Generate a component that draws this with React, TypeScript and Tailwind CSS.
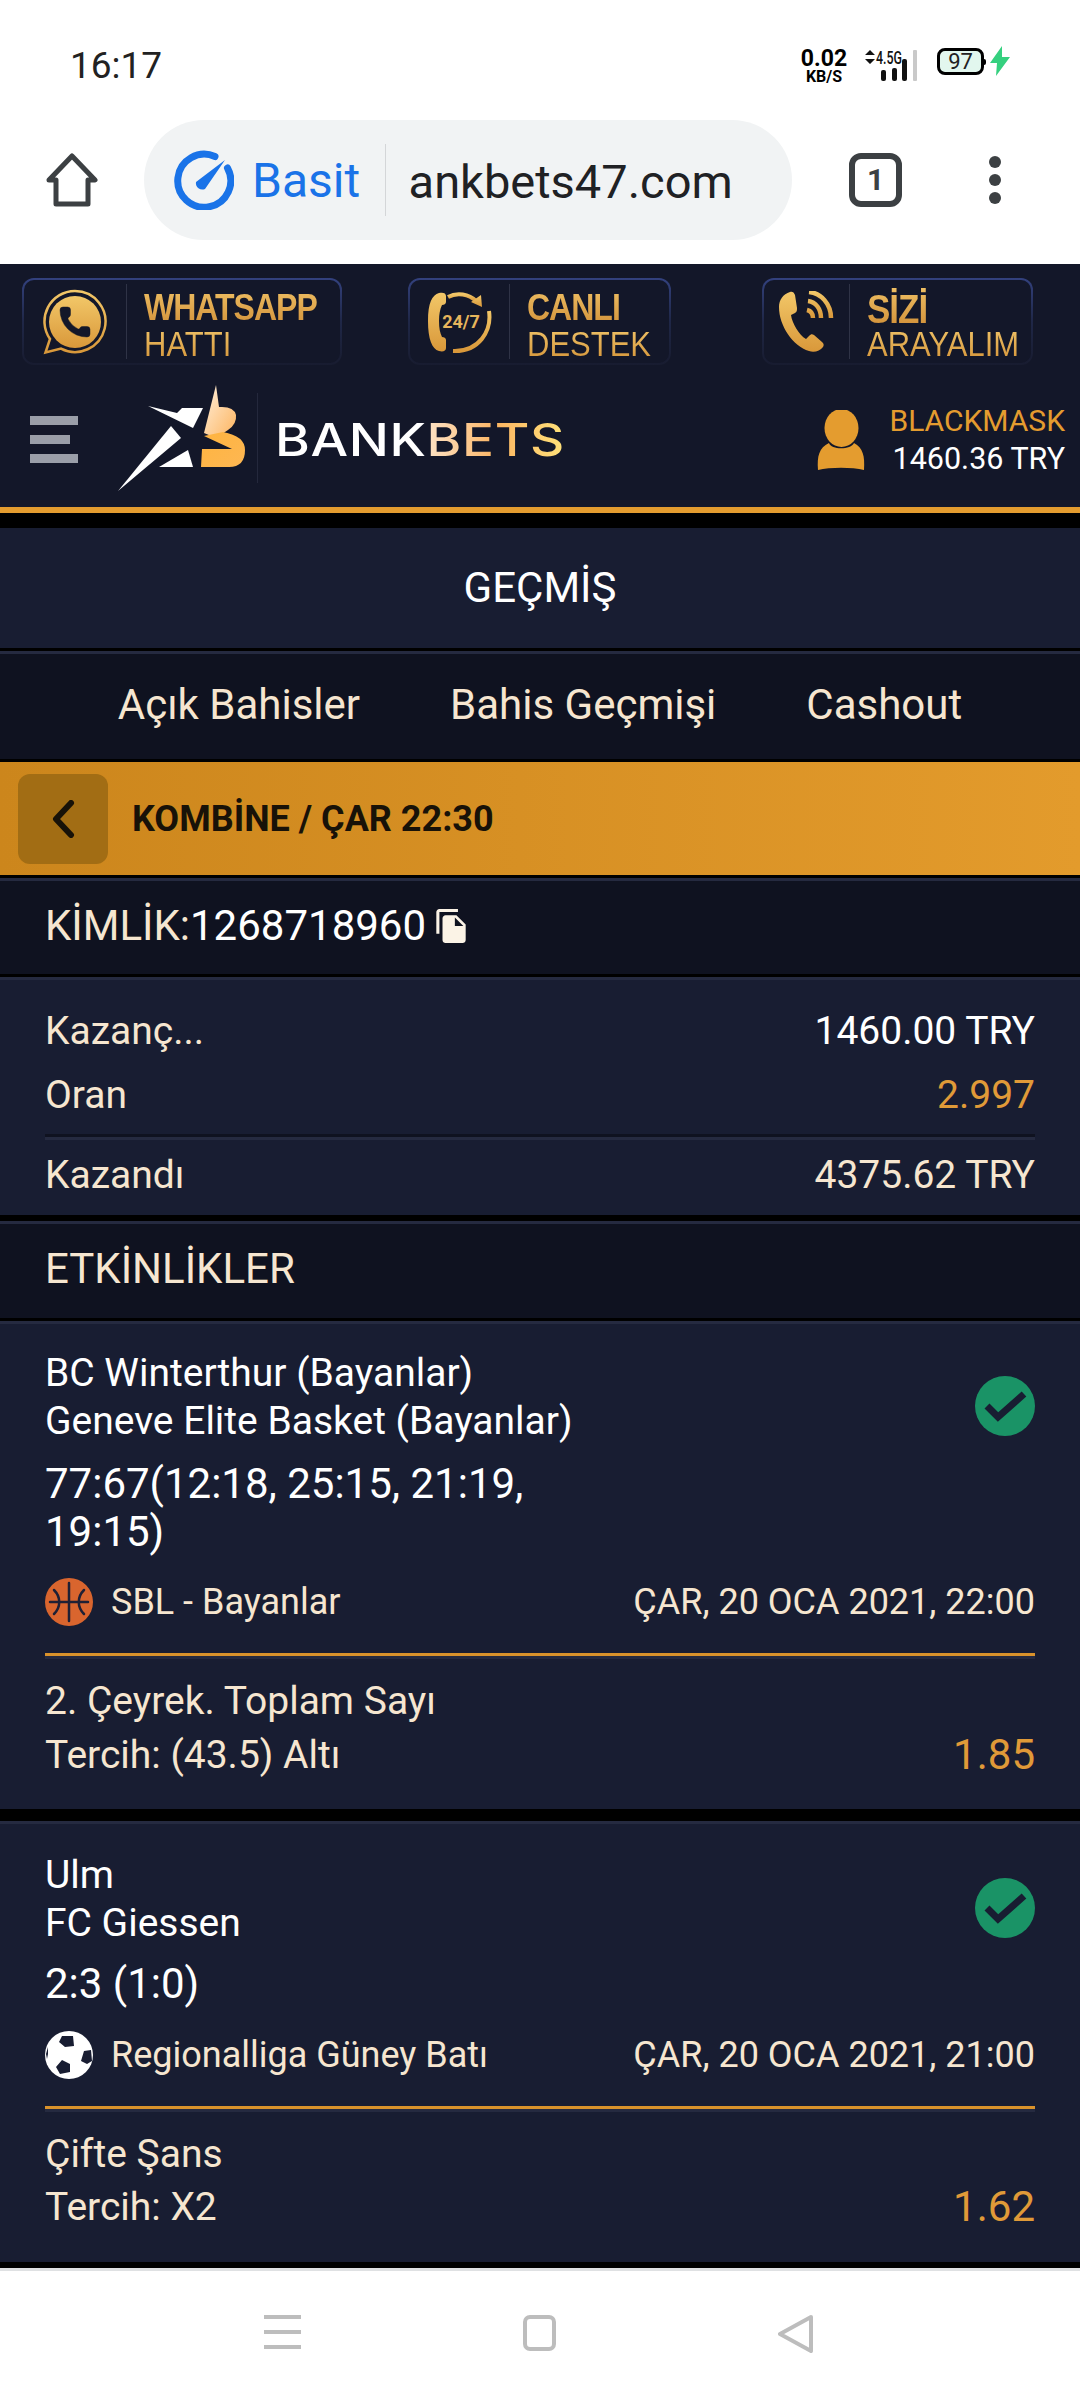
const goldId = "gold";

function GoldDefs() {
  return (
    <svg width="0" height="0" className="absolute">
      <defs>
        <linearGradient id={goldId} x1="0" y1="0" x2="0" y2="1">
          <stop offset="0%" stopColor="#f2c768" />
          <stop offset="100%" stopColor="#d9983a" />
        </linearGradient>
      </defs>
    </svg>
  );
}

const handset =
  "M13.832 16.568a1 1 0 0 0 1.213-.303l.355-.465A2 2 0 0 1 17 15h3a2 2 0 0 1 2 2v3a2 2 0 0 1-2 2A18 18 0 0 1 2 4a2 2 0 0 1 2-2h3a2 2 0 0 1 2 2v3a2 2 0 0 1-.8 1.6l-.468.351a1 1 0 0 0-.292 1.233 14 14 0 0 0 6.392 6.384";

function WhatsappIcon() {
  return (
    <svg viewBox="0 0 66 66" className="h-[66px] w-[66px]">
      <path
        d="M33 2a30.5 30.5 0 1 1-14 57.6L3.500 63.500 8 50A30.500 30.500 0 0 1 33 2Z"
        fill="none"
        stroke={`url(#${goldId})`}
        strokeWidth="2.500"
      />
      <circle cx="33" cy="33" r="26" fill={`url(#${goldId})`} />
      <g transform="translate(15 15) scale(1.5)">
        <path d={handset} fill="#131729" stroke="#131729" strokeWidth="0.3" />
      </g>
    </svg>
  );
}

function SupportIcon() {
  return (
    <svg viewBox="0 0 64 66" className="h-[66px] w-[64px]">
      <path
        d="M11 4C4 6 0 14 0 32s4 28 11 30c4 1 7 0 7-3v-8c0-2-2-3-4-3-2-4-3-9-3-16s1-12 3-16c2 0 4-1 4-3V7c0-3-3-4-7-3Z"
        fill={`url(#${goldId})`}
      />
      <path d="M20 8c9-5 21-3 28 4" fill="none" stroke={`url(#${goldId})`} strokeWidth="4" />
      <path d="M54 18l-1-12-10 7Z" fill={`url(#${goldId})`} />
      <path d="M61 22c3 20-10 41-36 40" fill="none" stroke={`url(#${goldId})`} strokeWidth="4" />
      <text x="33" y="39" textAnchor="middle" fontSize="18" fontWeight="700" fill="#e6b55c" fontFamily="Roboto, sans-serif">
        24/7
      </text>
    </svg>
  );
}

function CallIcon() {
  return (
    <svg viewBox="0 0 58 62" className="h-[62px] w-[58px]">
      <path
        d="M12 1C5 3 1 9 1 16c0 19 14 39 30 44 5 2 11 0 14-4 1-2 1-3-1-5l-8-7c-2-1-3-1-5 1l-3 3C21 44 14 32 13 24l4-2c2-1 2-3 2-5L17 4c-1-3-3-4-5-3Z"
        fill={`url(#${goldId})`}
      />
      <path d="M29 19c4 1 6 4 6 8M30 10c8 1 13 8 13 17M31 1c12 1 22 12 22 26" fill="none" stroke={`url(#${goldId})`} strokeWidth="4.500" />
    </svg>
  );
}

function TopButton(props: { width: string; icon: React.ReactNode; iconBox: string; top: string; bottom: string; topTall?: boolean }) {
  return (
    <div className={`${props.width} h-[87px] rounded-[12px] bg-gradient-to-b from-[#33417e] via-[#1f2747] to-[#181c30] p-[2px]`}>
      <div className="flex h-full items-center rounded-[10px] bg-[#131729]">
        <div className={`${props.iconBox} flex h-[75px] items-center justify-center border-r border-[#2f3346]`}>{props.icon}</div>
        <div className="ml-[17px] flex flex-col font-['Liberation_Sans',sans-serif]">
          <span className={`${props.topTall ? "text-[35px]" : "text-[32px]"} origin-bottom scale-y-[1.15] bg-gradient-to-b from-[#f3c76a] to-[#d2923a] bg-clip-text pt-[8px] font-bold leading-[31px] tracking-[-1px] text-transparent`}>
            {props.top}
          </span>
          <span className="origin-top scale-y-[1.15] bg-gradient-to-b from-[#f0c469] to-[#d49539] bg-clip-text text-[31px] leading-[31px] text-transparent">{props.bottom}</span>
        </div>
      </div>
    </div>
  );
}

function StatusBar() {
  return (
    <div className="flex h-[110px] items-start bg-white pl-[70px] pt-[46px] text-black">
      <span className="text-[37px] leading-[40px] text-[#222]">16:17</span>
      <div className="ml-auto mr-[70px] flex items-start">
        <div className="flex w-[50px] flex-col items-center font-bold leading-none">
          <span className="mt-[3px] text-[23px] leading-[20px]">0.02</span>
          <span className="text-[16px] leading-[16px]">KB/S</span>
        </div>
        <svg viewBox="0 0 60 36" className="ml-[12px] mt-[3px] h-[36px] w-[60px]">
          <path d="M4 6l5-5 5 5ZM4 10l5 5 5-5Z" fill="#111" />
          <text x="15" y="15" fontSize="18" fontWeight="500" fill="#111" fontFamily="Roboto, sans-serif" textLength="26" lengthAdjust="spacingAndGlyphs">
            4.5G
          </text>
          <rect x="20" y="21" width="5" height="11" rx="2" fill="#111" />
          <rect x="31" y="19" width="5" height="13" rx="2" fill="#111" />
          <rect x="41" y="10" width="5" height="22" rx="2" fill="#111" />
          <rect x="52" y="1" width="4" height="31" rx="1" fill="#c9c9c9" />
        </svg>
        <div className="ml-[16px] mt-[2px] flex h-[27px] w-[47px] items-center justify-center rounded-[8px] border-[3px] border-black bg-[#e2f7ee] text-[22px] leading-none text-[#222]">97</div>
        <div className="mt-[13px] h-[6px] w-[2px] rounded-r bg-black" />
        <svg viewBox="0 0 20 30" className="ml-[4px] h-[30px] w-[20px]">
          <path d="M12 0 0 17h7l-1 13L20 11h-8Z" fill="#35d07f" />
        </svg>
      </div>
    </div>
  );
}

function BrowserBar() {
  return (
    <div className="flex h-[154px] items-start bg-white">
      <svg viewBox="0 0 54 54" className="ml-[45px] mt-[43px] h-[54px] w-[54px]">
        <path d="M4 27 27 3l23 24h-7v24H11V27Z" fill="none" stroke="#3c4043" strokeWidth="5" strokeLinejoin="round" />
      </svg>
      <div className="ml-[45px] mt-[10px] flex h-[120px] w-[648px] items-center rounded-full bg-[#f1f3f4]">
        <svg viewBox="0 0 60 60" className="ml-[30px] h-[60px] w-[60px]">
          <path d="M41 6.500A26.500 26.500 0 1 0 53.500 18" fill="none" stroke="#1a73e8" strokeWidth="7" strokeLinecap="round" />
          <path d="M51 10 31 39a6.500 6.500 0 0 1-9-7Z" fill="#1a73e8" />
        </svg>
        <span className="ml-[18px] mt-[2px] text-[48px] leading-none text-[#1a73e8]">Basit</span>
        <div className="ml-[25px] h-[72px] w-[1px] bg-[#d4d6d8]" />
        <div className="ml-[24px] mt-[2px] w-[330px] overflow-hidden">
          <div className="-ml-[28px] whitespace-nowrap text-[47px] leading-none text-[#202124]">bankbets47.com</div>
        </div>
      </div>
      <div className="ml-[57px] mt-[43px] flex h-[54px] w-[53px] items-center justify-center rounded-[12px] border-[6px] border-[#3c4043] text-[30px] font-bold leading-none text-[#3c4043]">1</div>
      <div className="ml-[87px] mt-[46px] flex flex-col gap-[6px]">
        <div className="h-[12px] w-[12px] rounded-full bg-[#3c4043]" />
        <div className="h-[12px] w-[12px] rounded-full bg-[#3c4043]" />
        <div className="h-[12px] w-[12px] rounded-full bg-[#3c4043]" />
      </div>
    </div>
  );
}

function Logo() {
  return (
    <svg viewBox="110 380 150 115" className="h-[115px] w-[150px]">
      <defs>
        <linearGradient id="peach" x1="0" y1="0" x2="1" y2="1">
          <stop offset="0%" stopColor="#fff0dd" />
          <stop offset="100%" stopColor="#fdb45e" />
        </linearGradient>
        <linearGradient id="amber" x1="0" y1="0" x2="1" y2="1">
          <stop offset="0%" stopColor="#ffb43f" />
          <stop offset="100%" stopColor="#fdb753" />
        </linearGradient>
      </defs>
      <polygon points="148,406 177,413 182,408 203,408 193,428" fill="#fff" />
      <polygon points="118,491 171,426 181,438" fill="#fff" />
      <polygon points="159,467 188,450 193,467" fill="#fff" />
      <path d="M216 385 204 433 216 438 228 430Q237 424 236 415 234 407 222 407L219 407Z" fill="url(#peach)" />
      <path d="M204 436 223 432Q245 436 245 450 245 467 229 467L201 467 202 449 232 449Z" fill="url(#amber)" />
      <line x1="257.500" y1="393" x2="257.500" y2="483" stroke="#24283c" strokeWidth="1" />
    </svg>
  );
}

function TopHeader() {
  return (
    <div className="bg-[#131729]">
      <div className="flex h-[108px] items-start pl-[22px] pt-[14px]">
        <TopButton width="w-[320px]" iconBox="w-[103px] shrink-0" top="WHATSAPP" bottom="HATTI" icon={<WhatsappIcon />} />
        <div className="ml-[66px]">
          <TopButton width="w-[263px]" iconBox="w-[100px] shrink-0" top="CANLI" bottom="DESTEK" icon={<SupportIcon />} />
        </div>
        <div className="ml-[91px]">
          <TopButton width="w-[271px]" iconBox="w-[86px] shrink-0" top="SİZİ" bottom="ARAYALIM" icon={<CallIcon />} topTall />
        </div>
      </div>
      <div className="flex h-[135px] items-center">
        <div className="ml-[30px] flex w-[48px] flex-col gap-[10px]">
          <div className="h-[9px] w-[48px] bg-[#9a9ea8]" />
          <div className="h-[9px] w-[40px] bg-[#9a9ea8]" />
          <div className="h-[9px] w-[48px] bg-[#9a9ea8]" />
        </div>
        <div className="-mt-[4px] ml-[32px]">
          <Logo />
        </div>
        <div className="ml-[15px] flex origin-left scale-x-[1.18] whitespace-nowrap font-['Inter',sans-serif] text-[45px] font-medium leading-none tracking-[0.5px]">
          <span className="text-white">BANK</span>
          <span className="bg-gradient-to-r from-[#fde3c6] via-[#fbb562] to-[#ffe27a] bg-clip-text text-transparent">BETS</span>
        </div>
        <svg viewBox="0 0 48 60" className="ml-auto h-[60px] w-[48px]">
          <ellipse cx="24.500" cy="18" rx="17" ry="19" fill="#e49c2f" />
          <path d="M1 60C0 46 2 38 12 33c2 7 22 7 25 0 9 5 11 13 10 27-12-3-34-3-46 0Z" fill="#e49c2f" />
        </svg>
        <div className="ml-[24px] mr-[15px] flex flex-col items-end">
          <span className="text-[30px] leading-[38px] text-[#e49c2f]">BLACKMASK</span>
          <span className="text-[30.500px] leading-[38px] text-white">1460.36 TRY</span>
        </div>
      </div>
      <div className="h-[6px] bg-[#e49c2f]" />
      <div className="h-[15px] bg-black" />
    </div>
  );
}

function Tabs() {
  return (
    <div className="flex h-[105px] items-center justify-center gap-[90px] bg-[#0f1220] pb-[4px] text-[42px] text-[#f6e6d0]">
      <span>Açık Bahisler</span>
      <span>Bahis Geçmişi</span>
      <span>Cashout</span>
    </div>
  );
}

function SectionGap(props: { black: string }) {
  return (
    <>
      <div className={`${props.black} bg-black`} />
      <div className="h-[3px] bg-[#252a40]" />
    </>
  );
}

function Basketball() {
  return (
    <svg viewBox="0 0 48 48" className="h-[48px] w-[48px] shrink-0">
      <circle cx="24" cy="24" r="24" fill="#d9652e" />
      <path d="M24 5v38M5 24h38M9 12c7 7 7 17 0 24M39 12c-7 7-7 17 0 24" fill="none" stroke="#1f2035" strokeWidth="2.500" strokeLinecap="round" />
    </svg>
  );
}

function Football() {
  return (
    <svg viewBox="0 0 48 48" className="h-[48px] w-[48px] shrink-0">
      <circle cx="24" cy="24" r="24" fill="#fff" />
      <path d="M17 5 28 5 29 15 20 16 14 11ZM39 20 46 19 47 30 42 33 36 30ZM17 29 25 33 25 41 15 43 11 36ZM3 16 1 23 2 28 3 23Z" fill="#181d32" />
    </svg>
  );
}

function Check() {
  return (
    <div className="mt-[27px] flex h-[60px] w-[60px] shrink-0 items-center justify-center rounded-full bg-[#1a9366]">
      <svg viewBox="0 0 60 60" className="h-[60px] w-[60px]">
        <path d="M12 30 23 41 49 18" fill="none" stroke="#181d32" strokeWidth="7" />
      </svg>
    </div>
  );
}

type Match = {
  pt: string;
  home: string;
  away: string;
  score: string;
  scoreMt: string;
  league: string;
  leagueMt: string;
  icon: React.ReactNode;
  date: string;
  lineMt: string;
  market: string;
  marketMt: string;
  pick: string;
  pickMt: string;
  odd: string;
  pb: string;
};

function MatchCard({ m }: { m: Match }) {
  return (
    <div className={`bg-[#181d32] px-[45px] text-[39px] ${m.pt} ${m.pb}`}>
      <div className="flex items-start justify-between">
        <div className="w-[530px] text-white">
          <div className="leading-[48px]">{m.home}</div>
          <div className="leading-[48px]">{m.away}</div>
          <div className={`${m.scoreMt} text-[42px] leading-[48px]`}>{m.score}</div>
        </div>
        <Check />
      </div>
      <div className={`${m.leagueMt} flex h-[48px] items-center text-[36px] leading-[48px] text-[#f6e6d0]`}>
        {m.icon}
        <span className="ml-[18px]">{m.league}</span>
        <span className="ml-auto">{m.date}</span>
      </div>
      <div className={`${m.lineMt} h-[3px] bg-[#d9922b]`} />
      <div className="h-[3px] bg-[#252a40]" />
      <div className={`${m.marketMt} leading-[48px] text-[#f6e6d0]`}>{m.market}</div>
      <div className={`${m.pickMt} flex items-center justify-between leading-[48px] text-[#f6e6d0]`}>
        <span>{m.pick}</span>
        <span className="text-[42px] text-[#e09a38]">{m.odd}</span>
      </div>
    </div>
  );
}

const matches: Match[] = [
  {
    pt: "pt-[25px]",
    home: "BC Winterthur (Bayanlar)",
    away: "Geneve Elite Basket (Bayanlar)",
    score: "77:67(12:18, 25:15, 21:19, 19:15)",
    scoreMt: "mt-[15px]",
    league: "SBL - Bayanlar",
    leagueMt: "mt-[22px]",
    icon: <Basketball />,
    date: "ÇAR, 20 OCA 2021, 22:00",
    lineMt: "mt-[27px]",
    market: "2. Çeyrek. Toplam Sayı",
    marketMt: "mt-[18px]",
    pick: "Tercih: (43.5) Altı",
    pickMt: "mt-[6px]",
    odd: "1.85",
    pb: "pb-[30px]",
  },
  {
    pt: "pt-[27px]",
    home: "Ulm",
    away: "FC Giessen",
    score: "2:3 (1:0)",
    scoreMt: "mt-[13px]",
    league: "Regionalliga Güney Batı",
    leagueMt: "mt-[23px]",
    icon: <Football />,
    date: "ÇAR, 20 OCA 2021, 21:00",
    lineMt: "mt-[27px]",
    market: "Çifte Şans",
    marketMt: "mt-[18px]",
    pick: "Tercih: X2",
    pickMt: "mt-[5px]",
    odd: "1.62",
    pb: "pb-[31px]",
  },
];

export default function App() {
  return (
    <div className="h-[2400px] w-[1080px] overflow-hidden bg-white font-['Roboto',sans-serif] text-[39px]">
      <GoldDefs />
      <StatusBar />
      <BrowserBar />
      <TopHeader />

      <div className="flex h-[120px] items-center justify-center bg-[#181d32] pb-[2px] text-[42px] text-white">GEÇMİŞ</div>
      <SectionGap black="h-[3px]" />
      <Tabs />
      <div className="h-[3px] bg-black" />

      <div className="flex h-[113px] items-center bg-gradient-to-r from-[#cc861c] to-[#e39b2c]">
        <div className="ml-[18px] flex h-[90px] w-[90px] items-center justify-center rounded-[12px] bg-[#a26d14]">
          <svg viewBox="0 0 24 38" className="h-[38px] w-[24px]">
            <path d="M20 3 5 19l15 16" fill="none" stroke="#181208" strokeWidth="6" strokeLinecap="round" strokeLinejoin="round" />
          </svg>
        </div>
        <span className="ml-[24px] text-[36px] font-bold text-[#181208]">KOMBİNE / ÇAR 22:30</span>
      </div>
      <SectionGap black="h-[3px]" />

      <div className="flex h-[93px] items-center bg-[#0f1220] pb-[4px] pl-[45px] text-[42px] text-[#f6e6d0]">
        <span>KİMLİK:</span>
        <span className="text-white">1268718960</span>
        <svg viewBox="2 1 19 22" className="ml-[9px] h-[34px] w-[32px]">
          <path
            d="M16 1H4c-1.100 0-2 .9-2 2v14h2V3h12V1zm-1 4l6 6v10c0 1.100-.9 2-2 2H7.990C6.890 23 6 22.100 6 21l.01-14c0-1.100.89-2 1.990-2h7zm-1 7h5.500L14 6.500V12z"
            fill="#fbf3e6"
          />
        </svg>
      </div>
      <SectionGap black="h-[3px]" />

      <div className="h-[235px] bg-[#181d32] px-[45px] pt-[27px] text-[#f6e6d0]">
        <div className="flex h-[48px] items-center justify-between">
          <span>Kazanç...</span>
          <span className="text-white">1460.00 TRY</span>
        </div>
        <div className="mt-[16px] flex h-[48px] items-center justify-between">
          <span>Oran</span>
          <span className="text-[#e09a38]">2.997</span>
        </div>
        <div className="mt-[15px] h-[3px] bg-[#0f1220]" />
        <div className="h-[3px] bg-[#252a40]" />
        <div className="mt-[11px] flex h-[48px] items-center justify-between">
          <span>Kazandı</span>
          <span>4375.62 TRY</span>
        </div>
      </div>
      <SectionGap black="h-[6px]" />

      <div className="flex h-[94px] items-center bg-[#0f1220] pb-[6px] pl-[45px] text-[42px] text-[#f6e6d0]">ETKİNLİKLER</div>
      <SectionGap black="h-[3px]" />

      <MatchCard m={matches[0]} />
      <SectionGap black="h-[12px]" />
      <MatchCard m={matches[1]} />

      <div className="h-[6px] bg-black" />
      <div className="h-[3px] bg-[#dfe1e3]" />
      <div className="flex items-start bg-white pt-[44px]">
        <div className="ml-[264px] flex h-[34px] w-[37px] flex-col justify-between">
          <div className="h-[4px] bg-[#bdbdbd]" />
          <div className="h-[4px] bg-[#bdbdbd]" />
          <div className="h-[4px] bg-[#bdbdbd]" />
        </div>
        <div className="ml-[222px] h-[36px] w-[33px] rounded-[7px] border-[4px] border-[#bdbdbd]" />
        <svg viewBox="0 0 36 38" className="ml-[222px] h-[38px] w-[36px]">
          <path d="M33 2 2 19l31 17Z" fill="none" stroke="#bdbdbd" strokeWidth="4" strokeLinejoin="round" />
        </svg>
      </div>
    </div>
  );
}
